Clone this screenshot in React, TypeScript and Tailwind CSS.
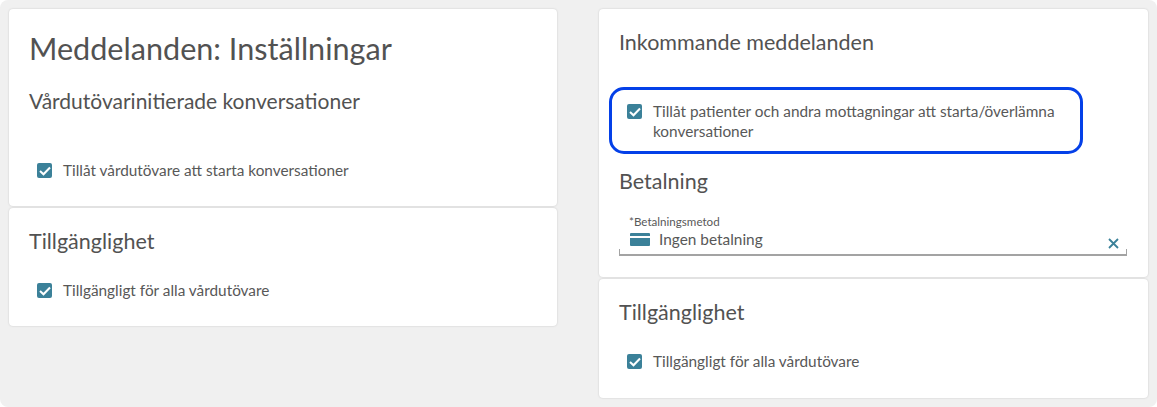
const font = { fontFamily: 'Lato, sans-serif' };

function Check({ label }: { label: string }) {
    return (
        <div className="flex items-start gap-[11px]">
            <div className="mt-[3px] w-[15px] h-[15px] shrink-0 rounded-[2px] bg-[#3b8199] flex items-center justify-center">
                <svg width="12" height="10" viewBox="0 0 12 10" fill="none">
                    <path d="M1 5 L4.5 8.3 L11 1.5" stroke="white" strokeWidth="2" />
                </svg>
            </div>
            <span className="text-[15.35px] leading-[20px] text-[#585858]">{label}</span>
        </div>
    );
}

function Card({ className, children }: { className: string; children: React.ReactNode }) {
    return (
        <div className={`bg-white rounded-[4px] shadow-[0_0_2px_rgba(0,0,0,0.18)] ${className}`}>
            {children}
        </div>
    );
}

export default function App() {
    return (
        <div className="w-[1157px] h-[407px] bg-white overflow-hidden" style={font}>
            <div className="w-full h-full bg-[#f0f0f0] rounded-[8px] pt-[9px] pl-[9px] flex gap-[41px]">
                <div className="w-[548px] flex flex-col gap-[2px]">
                    <Card className="h-[197px] pl-[20px] pt-[20px]">
                        <h1 className="text-[30.6px] leading-[40px] text-[#525252]">Meddelanden: Inställningar</h1>
                        <h2 className="mt-[18px] text-[21px] leading-[28px] text-[#525252]">Vårdutövarinitierade konversationer</h2>
                        <div className="mt-[45px] pl-[8px]">
                            <Check label="Tillåt vårdutövare att starta konversationer" />
                        </div>
                    </Card>
                    <Card className="h-[118px] pl-[20px] pt-[19px]">
                        <h2 className="text-[21.5px] leading-[28px] text-[#525252]">Tillgänglighet</h2>
                        <div className="mt-[25px] pl-[8px]">
                            <Check label="Tillgängligt för alla vårdutövare" />
                        </div>
                    </Card>
                </div>
                <div className="w-[549px] ml-px flex flex-col gap-[2px]">
                    <Card className="h-[268px] px-[20px] pt-[19px]">
                        <h2 className="text-[21.5px] leading-[28px] text-[#525252]">Inkommande meddelanden</h2>
                        <div className="mt-[31px] -ml-[10px] w-[474px] h-[67px] border-[3px] border-[#0440e8] rounded-[15px] pl-[15px] pt-[11px] pr-[20px]">
                            <Check label="Tillåt patienter och andra mottagningar att starta/överlämna konversationer" />
                        </div>
                        <h2 className="mt-[13px] text-[21.5px] leading-[28px] text-[#525252]">Betalning</h2>
                        <div className="mt-[20px] mr-px h-[41px] border-b-2 border-[#a3a3a3] relative">
                            <div className="pl-[10px] text-[11.6px] leading-[14px] text-[#585858]">*Betalningsmetod</div>
                            <div className="pl-[11px] flex items-center gap-[9px]">
                                <svg width="20" height="13" viewBox="0 0 20 13">
                                    <rect width="20" height="13" rx="1" fill="#3b8199" />
                                    <rect y="3" width="20" height="2" fill="white" />
                                </svg>
                                <span className="text-[15.4px] leading-[20px] text-[#585858]">Ingen betalning</span>
                            </div>
                            <svg className="absolute right-[8px] bottom-[5px]" width="11" height="11" viewBox="0 0 11 11">
                                <path d="M1 1 L10 10 M10 1 L1 10" stroke="#3b8199" strokeWidth="1.8" />
                            </svg>
                            <div className="absolute left-0 bottom-0 w-px h-[5px] bg-[#a3a3a3]" />
                            <div className="absolute right-0 bottom-0 w-px h-[5px] bg-[#a3a3a3]" />
                        </div>
                    </Card>
                    <Card className="h-[119px] px-[20px] pt-[19px]">
                        <h2 className="text-[21.5px] leading-[28px] text-[#525252]">Tillgänglighet</h2>
                        <div className="mt-[25px] pl-[8px]">
                            <Check label="Tillgängligt för alla vårdutövare" />
                        </div>
                    </Card>
                </div>
            </div>
        </div>
    );
}
